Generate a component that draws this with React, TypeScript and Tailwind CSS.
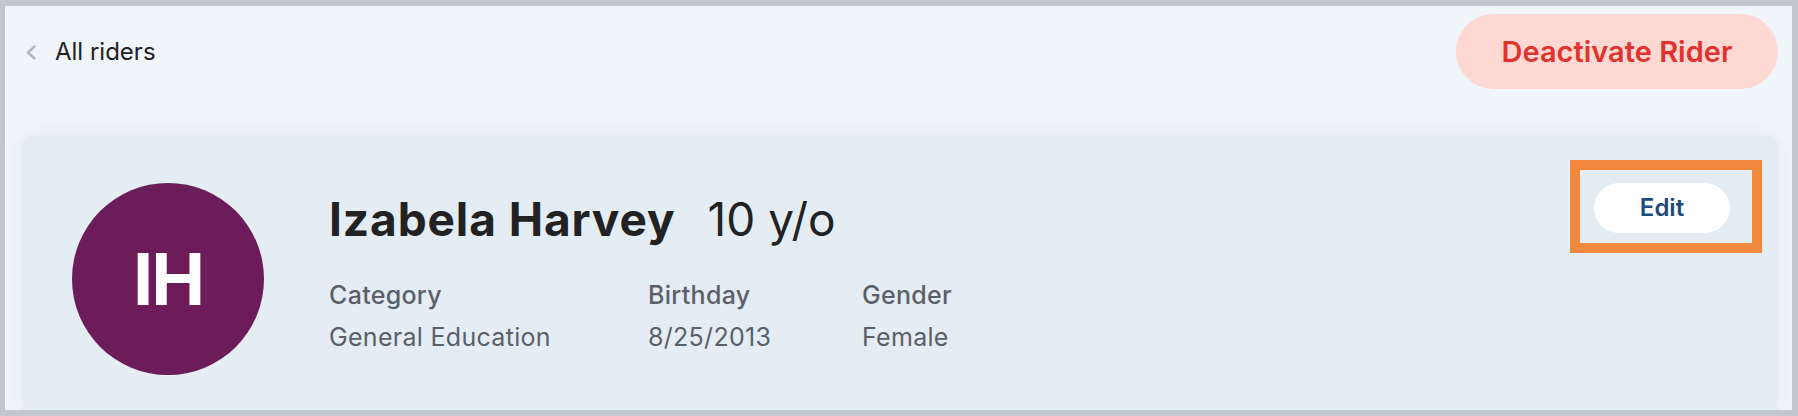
const details = [
  { label: "Category", value: "General Education", width: "w-[319px]" },
  { label: "Birthday", value: "8/25/2013", width: "w-[214px]" },
  { label: "Gender", value: "Female", width: "w-auto" },
];

export default function App() {
  return (
    <div className="h-[416px] w-full overflow-hidden border-[6px] border-l-[5px] border-[#c3c7cb] bg-[#eff5f9] font-['Inter',sans-serif]">
      <div className="flex h-full flex-col pl-[17px] pr-[14px] pt-[8px]">
        <header className="flex items-center justify-between">
          <a href="#" className="ml-[4px] flex items-center gap-[19px] text-[24px] leading-none text-[#222]">
            <svg width="10" height="15" viewBox="0 0 10 15" fill="none" className="mt-[1px]">
              <path d="M8.5 1.5 2 7.5l6.5 6" stroke="#b5b8bb" strokeWidth="2.5" strokeLinecap="round" strokeLinejoin="round" />
            </svg>
            <span>All riders</span>
          </a>
          <button className="h-[75px] w-[322px] rounded-full bg-[#ffd8d3] text-[29px] font-semibold text-[#e0332d]">
            Deactivate Rider
          </button>
        </header>

        <section className="mt-[46px] flex flex-1 items-start rounded-t-[12px] bg-[#e4ecf4] pl-[50px] pr-[16px] pt-[25px] shadow-[0_0_24px_rgba(30,60,90,0.05)]">
          <div className="mt-[23px] flex h-[192px] w-[192px] shrink-0 items-center justify-center rounded-full bg-[#6c1d59]">
            <span className="text-[72px] font-bold leading-none tracking-[-2px] text-white">IH</span>
          </div>

          <div className="ml-[65px] mt-[36px]">
            <div className="flex items-baseline gap-[32px] text-[46px] leading-none text-[#222]">
              <h1 className="font-bold tracking-[0.9px]">Izabela Harvey</h1>
              <span className="font-normal">10 y/o</span>
            </div>
            <div className="mt-[41px] flex">
              {details.map((item) => (
                <div key={item.label} className={item.width}>
                  <p className="text-[25px] font-medium leading-none tracking-[0.3px] text-[#5b6068]">{item.label}</p>
                  <p className="mt-[17px] text-[25px] leading-none tracking-[0.3px] text-[#5b6068]">{item.value}</p>
                </div>
              ))}
            </div>
          </div>

          <div className="ml-auto border-[10px] border-[#f0883d] pb-[10px] pl-[14px] pr-[22px] pt-[13px]">
            <button className="h-[50px] w-[136px] rounded-full bg-white text-[24px] font-semibold text-[#1d4b7a]">
              Edit
            </button>
          </div>
        </section>
      </div>
    </div>
  );
}
